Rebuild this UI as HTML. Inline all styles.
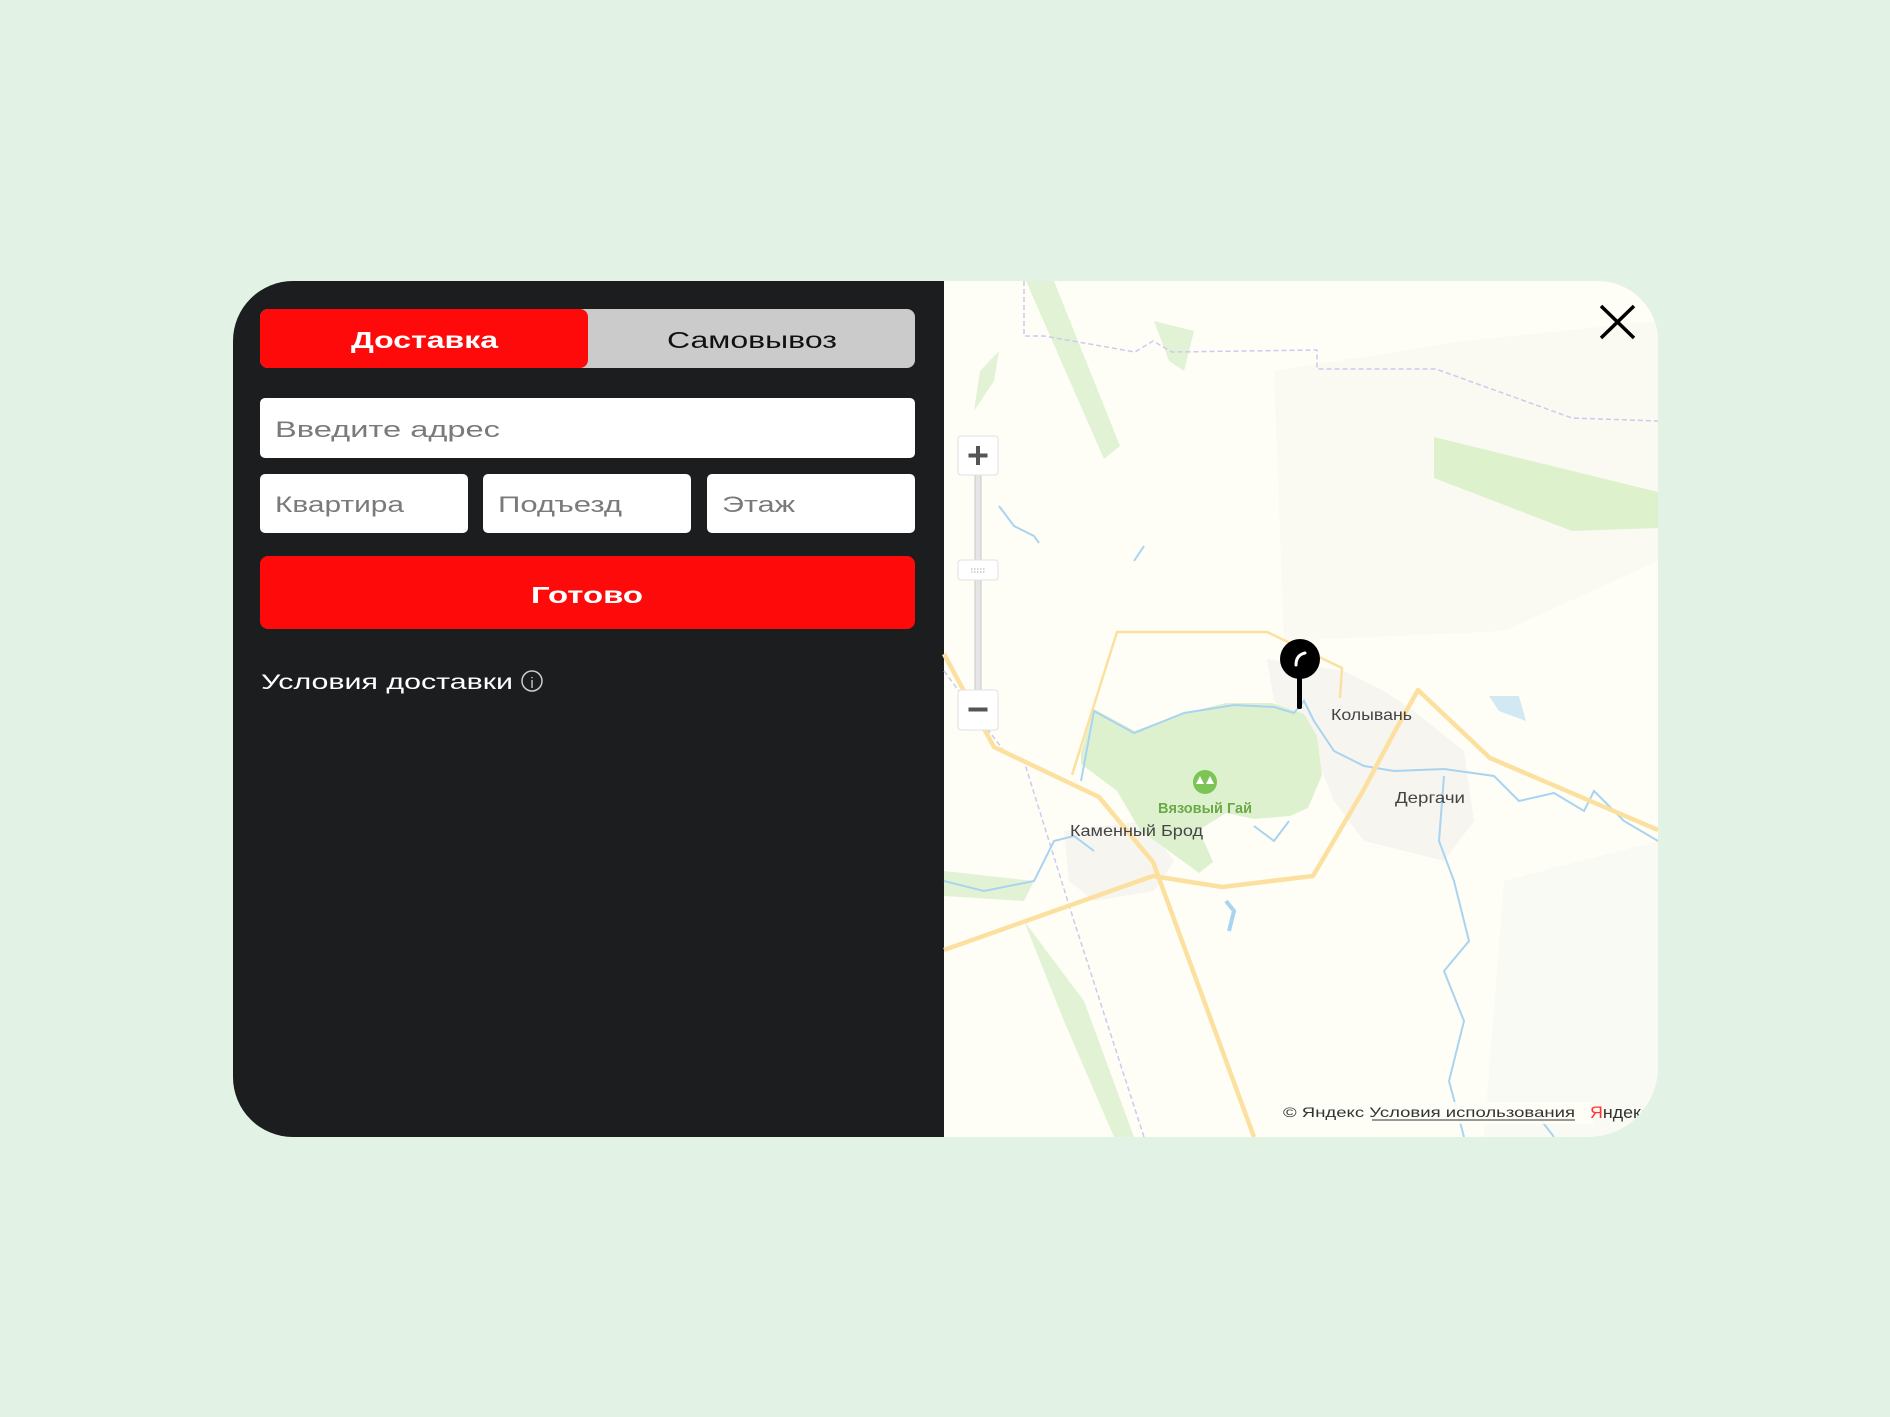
<!DOCTYPE html>
<html><head><meta charset="utf-8"><style>
html,body{margin:0;padding:0;background:#e2f2e5;width:1890px;height:1417px;overflow:hidden}
svg{display:block}
text{font-family:"Liberation Sans","DejaVu Sans",sans-serif}
</style></head><body>
<svg width="1890" height="1417" viewBox="0 0 1890 1417" xmlns="http://www.w3.org/2000/svg">
<defs>
<clipPath id="card"><path d="M293 281 H1598 A60 60 0 0 1 1658 341 V1067 A70 70 0 0 1 1588 1137 H293 A60 60 0 0 1 233 1077 V341 A60 60 0 0 1 293 281 Z"/></clipPath>
</defs>
<rect width="1890" height="1417" fill="#e2f2e5"/>
<g clip-path="url(#card)">
  <rect x="233" y="281" width="712" height="856" fill="#1c1d1f"/>
  <g transform="translate(944,281)">
    <rect width="714" height="856" fill="#fefef7"/>
    <path d="M330 90 L520 60 L714 40 L714 280 L560 350 L340 360 Z" fill="#fafaf3"/>
    <path d="M560 600 L714 560 L714 856 L540 856 Z" fill="#fafaf4"/>
    <path d="M82 0 L110 0 L176 165 L160 178 Z" fill="#e2f2d4"/>
    <path d="M36 90 L55 70 L50 100 L30 130 Z" fill="#e2f2d4"/>
    <path d="M490 156 L714 211 L714 247 L628 250 L490 197 Z" fill="#ddf2cc"/>
    <path d="M210 40 L250 50 L240 90 L225 80 Z" fill="#e2f2d4"/>
    <path d="M80 640 L140 720 L190 856 L170 856 L120 740 Z" fill="#e2f2d4"/>
    <path d="M0 590 L90 600 L80 620 L0 615 Z" fill="#e2f2d4"/>
    <path d="M323 378 L400 390 L440 410 L470 430 L520 470 L530 540 L500 580 L460 570 L420 560 L390 520 L370 470 L330 420 Z" fill="#f7f5f0"/>
    <path d="M120 550 L200 540 L230 580 L210 610 L150 620 L125 600 Z" fill="#f7f5f0"/>
    <path d="M137 472 L150 428 L191 450 L237 433 L282 422 L328 422 L360 433 L373 455 L378 494 L364 527 L346 535 L310 538 L282 532 L255 549 L269 581 L255 592 L196 549 L173 510 L137 483 Z" fill="#def1cf"/>
    <path d="M80 0 L80 55 L100 55 L191 71 L209 60 L228 71 L373 69 L373 88 L492 88 L628 137 L714 140" fill="none" stroke="#cfc8f0" stroke-width="1.5" stroke-dasharray="5 3"/>
    <path d="M0 390 L60 470 L80 480 L130 640 L200 856" fill="none" stroke="#cfc8f0" stroke-width="1.5" stroke-dasharray="5 3"/>
    <g fill="none" stroke="#a9d4f0" stroke-width="2">
      <path d="M137 500 L150 430 L190 452 L240 432 L290 424 L330 426 L350 432 L360 420 L370 440 L390 470 L420 485 L450 490 L500 488 L550 495 L575 520 L610 512 L640 530 L650 510 L680 540 L714 560"/>
      <path d="M500 495 L495 560 L510 600 L525 660 L500 690 L520 740 L505 800 L520 856"/>
      <path d="M0 600 L40 610 L90 600 L110 560 L130 555 L150 570"/>
      <path d="M55 225 L70 245 L90 255 L95 262"/>
      <path d="M200 265 L190 280"/>
      <path d="M590 830 L610 856"/>
      <path d="M310 545 L330 560 L345 540"/>
    </g>
    <path d="M545 415 L575 415 L582 440 L555 430 Z" fill="#d2e8f3"/>
    <path d="M282 620 L290 630 L285 650" stroke="#a9d4f0" stroke-width="4" fill="none"/>
    <g fill="none" stroke="#fce0a0" stroke-linejoin="round">
      <path d="M128 494 L173 351 L323 351 L398 387 L396 417" stroke-width="2.5"/>
      <path d="M0 373 L50 466 L155 516 L209 581 L310 856" stroke-width="4.5"/>
      <path d="M0 669 L209 595 L278 606 L369 595 L419 510 L451 450 L474 409 L546 477 L714 549" stroke-width="4.5"/>
    </g>
    <circle cx="261" cy="501" r="12" fill="#7cc456"/>
    <path d="M256 495 l-4 8 h8 z M266 495 l-4 8 h8 z" fill="#fff"/>
    <text x="387" y="439" font-size="16" fill="#444" textLength="81" lengthAdjust="spacingAndGlyphs">Колывань</text>
    <text x="451" y="522" font-size="16" fill="#444" textLength="70" lengthAdjust="spacingAndGlyphs">Дергачи</text>
    <text x="126" y="555" font-size="16" fill="#444" textLength="133" lengthAdjust="spacingAndGlyphs">Каменный Брод</text>
    <text x="214" y="532" font-size="15" font-weight="bold" fill="#6aaa45" textLength="94" lengthAdjust="spacingAndGlyphs">Вязовый Гай</text>
    <rect x="353" y="390" width="5" height="38" rx="2" fill="#000"/>
    <circle cx="356" cy="378" r="20" fill="#000"/>
    <path d="M352 384 Q352 374 361 372" stroke="#fff" stroke-width="3" fill="none" stroke-linecap="round"/>
    <rect x="31" y="190" width="6" height="222" fill="#e6e6e6" stroke="#c8c8c8" stroke-width="1"/>
    <rect x="14" y="155" width="40" height="39" rx="3" fill="#fff" stroke="#e0e0e0"/>
    <path d="M34 165 V184 M24.5 174.5 H43.5" stroke="#555" stroke-width="4"/>
    <rect x="14" y="279" width="40" height="20" rx="3" fill="#fff" stroke="#e0e0e0"/>
    <path d="M27 288 h14 M27 291 h14" stroke="#aaa" stroke-width="1" stroke-dasharray="1.5 1.5"/>
    <rect x="14" y="409" width="40" height="40" rx="3" fill="#fff" stroke="#e0e0e0"/>
    <path d="M24.5 428.5 H43.5" stroke="#555" stroke-width="4"/>
    <path d="M657 25 L690 57 M690 25 L657 57" stroke="#000" stroke-width="3.5"/>
    <rect x="333" y="821" width="316" height="22" fill="#fefef7" opacity="0.9"/>
    <text x="339" y="836" font-size="14" fill="#333" textLength="292" lengthAdjust="spacingAndGlyphs">© Яндекс Условия использования</text>
    <line x1="428" y1="839" x2="631" y2="839" stroke="#333" stroke-width="1"/>
    <text x="646" y="837" font-size="17" fill="#333" textLength="60" lengthAdjust="spacingAndGlyphs"><tspan fill="#f33">Я</tspan>ндекс</text>
  </g>
</g>
<rect x="260" y="309" width="655" height="59" rx="8" fill="#cbcbcb"/>
<rect x="260" y="309" width="328" height="59" rx="8" fill="#ff0a0a"/>
<text x="351" y="348" font-size="23" font-weight="bold" fill="#fff" textLength="147" lengthAdjust="spacingAndGlyphs">Доставка</text>
<text x="667" y="348" font-size="23" fill="#111" textLength="170" lengthAdjust="spacingAndGlyphs">Самовывоз</text>
<rect x="260" y="398" width="655" height="60" rx="5" fill="#fff"/>
<text x="275" y="437" font-size="22" fill="#7a7a7a" textLength="225" lengthAdjust="spacingAndGlyphs">Введите адрес</text>
<rect x="260" y="474" width="208" height="59" rx="5" fill="#fff"/>
<rect x="483" y="474" width="208" height="59" rx="5" fill="#fff"/>
<rect x="707" y="474" width="208" height="59" rx="5" fill="#fff"/>
<text x="275" y="512" font-size="22" fill="#7a7a7a" textLength="129" lengthAdjust="spacingAndGlyphs">Квартира</text>
<text x="498" y="512" font-size="22" fill="#7a7a7a" textLength="124" lengthAdjust="spacingAndGlyphs">Подъезд</text>
<text x="722" y="512" font-size="22" fill="#7a7a7a" textLength="73" lengthAdjust="spacingAndGlyphs">Этаж</text>
<rect x="260" y="556" width="655" height="73" rx="8" fill="#ff0a0a"/>
<text x="531" y="603" font-size="23" font-weight="bold" fill="#fff" textLength="112" lengthAdjust="spacingAndGlyphs">Готово</text>
<text x="261" y="689" font-size="21" fill="#fff" textLength="252" lengthAdjust="spacingAndGlyphs">Условия доставки</text>
<circle cx="532" cy="681" r="10" fill="none" stroke="#ccc" stroke-width="1.5"/>
<text x="532" y="688" font-size="15" fill="#ccc" text-anchor="middle" font-family="Liberation Serif, serif">i</text>
</svg>
</body></html>
